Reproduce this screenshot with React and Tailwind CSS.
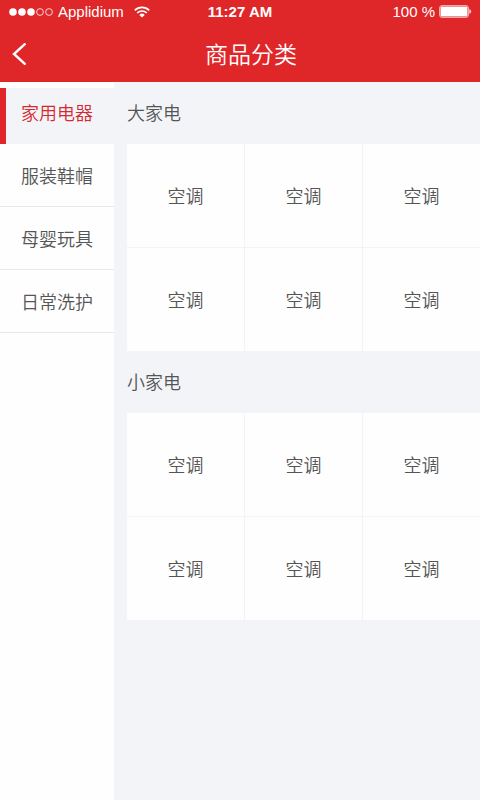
import React, { useState } from 'react';

const categories = ['家用电器', '服装鞋帽', '母婴玩具', '日常洗护'];

const sections = [
  { title: '大家电', items: ['空调', '空调', '空调', '空调', '空调', '空调'] },
  { title: '小家电', items: ['空调', '空调', '空调', '空调', '空调', '空调'] },
];

function StatusBar() {
  return (
    <div className="grid grid-cols-[1fr_auto_1fr] items-center h-6 px-2 text-[15px] leading-6 font-['Liberation_Sans',sans-serif]">
      <div className="flex items-center gap-1">
        <svg width="46" height="8" viewBox="0 0 46 8" fill="#fff" stroke="#fff">
          <circle cx="5" cy="4" r="3.8" stroke="none" />
          <circle cx="14" cy="4" r="3.8" stroke="none" />
          <circle cx="23" cy="4" r="3.8" stroke="none" />
          <circle cx="32" cy="4" r="3.4" fill="none" strokeWidth="0.8" />
          <circle cx="41" cy="4" r="3.4" fill="none" strokeWidth="0.8" />
        </svg>
        <span>Applidium</span>
        <svg className="ml-1.5" width="16" height="12" viewBox="0 0 16 12" fill="none" stroke="#fff" strokeWidth="1.7">
          <path d="M0.8 4.4a10.2 10.2 0 0 1 14.4 0" />
          <path d="M3.2 7a6.8 6.8 0 0 1 9.6 0" />
          <path d="M8 11.6L5.3 8.9a3.8 3.8 0 0 1 5.4 0z" fill="#fff" stroke="none" />
        </svg>
      </div>
      <span className="text-center font-bold">11:27 AM</span>
      <div className="flex items-center justify-end gap-1">
        <span>100 %</span>
        <svg width="33" height="14" viewBox="0 0 33 14">
          <rect x="0.5" y="0.5" width="29" height="12" rx="2.5" fill="none" stroke="#fff" strokeOpacity="0.6" />
          <rect x="1.5" y="1.5" width="27" height="10" rx="1" fill="#fff" />
          <path d="M30.3 4a2.6 2.6 0 0 1 0 5z" fill="#fff" fillOpacity="0.8" />
        </svg>
      </div>
    </div>
  );
}

function Header() {
  return (
    <header className="h-[82px] bg-[#df2628] text-white">
      <StatusBar />
      <div className="grid grid-cols-[60px_1fr_38px] items-center h-[58px]">
        <button type="button" aria-label="返回" className="pl-3">
          <svg width="15" height="24" viewBox="0 0 15 24" fill="none" stroke="#fff" strokeWidth="2.4" strokeLinecap="round">
            <path d="M12.8 3.2L2 13l10.8 9.8" />
          </svg>
        </button>
        <h1 className="text-center text-[23px] leading-8">商品分类</h1>
      </div>
    </header>
  );
}

function Sidebar({ active, onSelect }) {
  return (
    <nav className="w-[114px] shrink-0 pt-[6px] bg-[#fefefe]">
      {categories.map((name, index) => (
        <button
          key={name}
          type="button"
          onClick={() => onSelect(index)}
          className={
            index === active
              ? 'block w-full h-14 pl-[15px] pb-2 text-left border-l-6 border-[#df2628] bg-[#f3f4f8] text-[#d32a30]'
              : 'block w-full h-[63px] pl-[21px] text-left border-b border-[#e9e9eb]'
          }
        >
          {name}
        </button>
      ))}
    </nav>
  );
}

function Section({ title, items }) {
  return (
    <section>
      <h2 className="h-[62px] leading-[60px]">{title}</h2>
      <ul className="grid grid-cols-3 gap-px bg-[#f3f2f6]">
        {items.map((item, index) => (
          <li key={index} className="bg-[#fefefe]">
            <a href="#" className="block h-[103px] leading-[103px] text-center">{item}</a>
          </li>
        ))}
      </ul>
    </section>
  );
}

export default function App() {
  const [active, setActive] = useState(0);

  return (
    <div className="flex flex-col min-h-screen bg-[#f3f4f8] text-[18px] font-[350] text-[#555] font-['Noto_Sans_CJK_SC',sans-serif]">
      <Header />
      <div className="flex flex-1">
        <Sidebar active={active} onSelect={setActive} />
        <main className="flex-1 pl-[13px]">
          {sections.map((section) => (
            <Section key={section.title} title={section.title} items={section.items} />
          ))}
        </main>
      </div>
    </div>
  );
}
